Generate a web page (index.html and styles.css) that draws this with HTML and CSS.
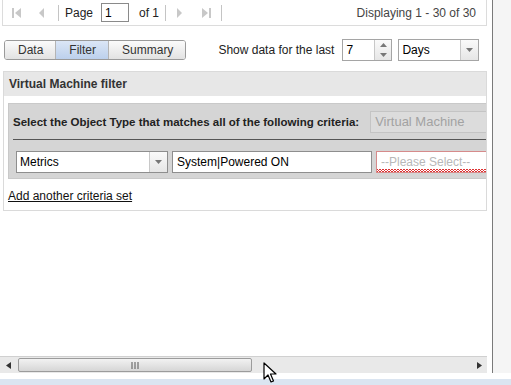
FILE: index.html
```html
<!DOCTYPE html>
<html lang="en">
<head>
  <meta charset="UTF-8">
  <title>Virtual Machine filter</title>
  <link rel="stylesheet" href="styles.css">
</head>
<body>
  <div class="window">
    <div class="main">
      <div class="pager">
        <span class="pg-btn first">
          <svg width="10" height="12" viewBox="0 0 10 12"><rect x="0" y="1" width="2" height="10" fill="#c8c8c8"/><path d="M9 1 L3 6 L9 11 Z" fill="#c8c8c8"/></svg>
        </span>
        <span class="pg-btn">
          <svg width="7" height="12" viewBox="0 0 7 12"><path d="M6 1 L1 6 L6 11 Z" fill="#c8c8c8"/></svg>
        </span>
        <span class="pg-sep"></span>
        <span class="pg-text">Page</span>
        <input class="pg-input" type="text" value="1">
        <span class="pg-text">of 1</span>
        <span class="pg-sep"></span>
        <span class="pg-btn next">
          <svg width="7" height="12" viewBox="0 0 7 12"><path d="M1 1 L6 6 L1 11 Z" fill="#c8c8c8"/></svg>
        </span>
        <span class="pg-btn last">
          <svg width="10" height="12" viewBox="0 0 10 12"><path d="M1 1 L7 6 L1 11 Z" fill="#c8c8c8"/><rect x="8" y="1" width="2" height="10" fill="#c8c8c8"/></svg>
        </span>
        <span class="pg-sep"></span>
        <span class="pg-info">Displaying 1 - 30 of 30</span>
      </div>

      <div class="options">
        <div class="tabs">
          <span class="tab">Data</span>
          <span class="tab tab-on">Filter</span>
          <span class="tab">Summary</span>
        </div>
        <span class="opt-label">Show data for the last</span>
        <div class="spinner">
          <span class="spin-value">7</span>
          <span class="spin-btns">
            <svg width="7" height="4" viewBox="0 0 7 4"><path d="M0 4 L3.5 0 L7 4 Z" fill="#777"/></svg>
            <svg width="7" height="4" viewBox="0 0 7 4"><path d="M0 0 L3.5 4 L7 0 Z" fill="#777"/></svg>
          </span>
        </div>
        <div class="combo days">
          <span class="combo-value">Days</span>
          <span class="combo-trigger">
            <svg width="7" height="4" viewBox="0 0 7 4"><path d="M0 0 L3.5 4 L7 0 Z" fill="#777"/></svg>
          </span>
        </div>
      </div>

      <div class="panel">
        <div class="panel-head">Virtual Machine filter</div>
        <div class="panel-body">
          <div class="criteria">
            <div class="crit-row">
              <span class="crit-label">Select the Object Type that matches all of the following criteria:</span>
              <span class="field disabled">Virtual Machine</span>
            </div>
            <div class="crit-set">
              <div class="combo metrics">
                <span class="combo-value">Metrics</span>
                <span class="combo-trigger">
                  <svg width="7" height="4" viewBox="0 0 7 4"><path d="M0 0 L3.5 4 L7 0 Z" fill="#777"/></svg>
                </span>
              </div>
              <span class="field attr">System|Powered ON</span>
              <span class="field invalid">--Please Select--</span>
            </div>
          </div>
          <a class="add-link" href="#">Add another criteria set</a>
        </div>
      </div>

      <div class="spacer"></div>

      <div class="hscroll">
        <span class="arrow">
          <svg width="5" height="7" viewBox="0 0 5 7"><path d="M5 0 L0 3.5 L5 7 Z" fill="#333"/></svg>
        </span>
        <span class="thumb">
          <svg width="9" height="7" viewBox="0 0 9 7"><path d="M1 0 V7 M4 0 V7 M7 0 V7" stroke="#555" stroke-width="1"/></svg>
        </span>
        <span class="track"></span>
        <span class="arrow">
          <svg width="5" height="7" viewBox="0 0 5 7"><path d="M0 0 L5 3.5 L0 7 Z" fill="#333"/></svg>
        </span>
      </div>
    </div>
    <div class="gutter"></div>
  </div>
  <div class="strip"></div>

  <svg class="cursor" width="14" height="22" viewBox="0 0 14 22">
    <path d="M1 1 L1 17 L5 13 L8 20 L10.5 19 L7.5 12 L13 12 Z" fill="#fff" stroke="#000" stroke-width="1.2" stroke-linejoin="round"/>
  </svg>
</body>
</html>
```

FILE: styles.css
```css
html, body {
  margin: 0;
  padding: 0;
  width: 511px;
  height: 385px;
  overflow: hidden;
  background: #fff;
  font-family: "Liberation Sans", Arial, sans-serif;
  font-size: 12px;
  color: #222;
}
.window {
  display: flex;
  height: 373px;
}
.main {
  width: 492px;
  display: flex;
  flex-direction: column;
}
.gutter {
  flex: 1;
  border-left: 1px solid #7a7a7a;
  background: #f5f5f5;
}
.strip {
  margin-top: 6px;
  height: 6px;
  background: #dbe5f1;
}

/* paging toolbar */
.pager {
  margin-left: 2px;
  width: 485px;
  height: 26px;
  box-sizing: border-box;
  border: 1px solid #dcdcdc;
  border-top: none;
  display: flex;
  align-items: center;
  padding-left: 9px;
}
.pg-btn {
  display: flex;
  align-items: center;
  margin-right: 13px;
}
.pg-btn.first {
  margin-right: 16px;
}
.pg-btn.next {
  margin-right: 18px;
}
.pg-btn.last {
  margin-right: 10px;
}
.pg-sep {
  width: 1px;
  height: 16px;
  background: #c4c4c4;
  margin: 0 6px 0 0;
}
.pg-sep + .pg-btn {
  margin-left: 4px;
}
.pg-text {
  margin-right: 8px;
}
.pg-text + .pg-sep {
  margin-left: -2px;
  margin-right: 6px;
}
.pg-input {
  width: 28px;
  height: 19px;
  box-sizing: border-box;
  padding: 1px 3px;
  margin: 0 10px 0 0;
  border: 1px solid #8a8a8a;
  font: inherit;
  color: #000;
}
.pg-info {
  margin-left: auto;
  margin-right: 10px;
  color: #444;
}

/* tabs and options row */
.options {
  display: flex;
  align-items: center;
  height: 22px;
  margin-top: 13px;
  padding-left: 4px;
}
.tabs {
  display: flex;
  height: 18px;
  border: 1px solid #9a9a9a;
  border-radius: 3px;
  overflow: hidden;
  margin-right: 32px;
}
.tab {
  display: flex;
  align-items: center;
  padding: 0 12px 0 13px;
  background: linear-gradient(#fbfbfb, #e2e2e2);
  border-left: 1px solid #b4b4b4;
  color: #333;
}
.tab:first-child {
  border-left: none;
}
.tab-on {
  background: linear-gradient(#dbe6f6, #bcd0ec);
}
.opt-label {
  margin-right: 8px;
}
.spinner,
.combo {
  display: flex;
  height: 20px;
  border: 1px solid #a5a5a5;
  background: #fff;
}
.spinner {
  width: 48px;
  margin-right: 6px;
}
.spin-value,
.combo-value {
  flex: 1;
  display: flex;
  align-items: center;
  padding-left: 3px;
  color: #000;
}
.spin-btns {
  width: 16px;
  display: flex;
  flex-direction: column;
  justify-content: space-around;
  align-items: center;
  border-left: 1px solid #c8c8c8;
  background: linear-gradient(#fafafa, #e6e6e6);
}
.combo-trigger {
  width: 17px;
  display: flex;
  align-items: center;
  justify-content: center;
  border-left: 1px solid #c8c8c8;
  background: linear-gradient(#fafafa, #e6e6e6);
}
.days {
  width: 79px;
}

/* filter panel */
.panel {
  margin: 10px 0 0 3px;
  width: 484px;
  box-sizing: border-box;
  border: 1px solid #dadada;
}
.panel-head {
  height: 24px;
  display: flex;
  align-items: center;
  padding-left: 5px;
  background: #e7e7e7;
  font-weight: bold;
  color: #333;
}
.panel-body {
  padding: 7px 0 7px 4px;
  overflow: hidden;
}
.criteria {
  width: 520px;
  background: #d5d5d5;
  border: 1px solid #c9c9c9;
}
.crit-row {
  display: flex;
  align-items: center;
  height: 35px;
  margin: 0 4px;
  border-bottom: 1px solid #555;
}
.crit-label {
  font-size: 11.5px;
  font-weight: bold;
  color: #222;
  margin-right: 11px;
}
.field {
  display: flex;
  align-items: center;
  height: 20px;
  padding-left: 4px;
  border: 1px solid #8e8e8e;
  background: #fff;
  color: #000;
}
.disabled {
  width: 125px;
  background: #dcdcdc;
  border-color: #c4c4c4;
  color: #a2a2a2;
  font-size: 13px;
}
.crit-set {
  display: flex;
  align-items: center;
  gap: 4px;
  padding: 11px 0 5px 7px;
}
.metrics {
  width: 150px;
  border-color: #8e8e8e;
}
.attr {
  width: 194px;
}
.invalid {
  width: 120px;
  border-color: #d68b8b;
  color: #b8b8b8;
  background:
    linear-gradient(135deg, transparent 40%, #d33 40%, #d33 60%, transparent 60%) 0 100% / 3px 3px repeat-x,
    linear-gradient(45deg, transparent 40%, #d33 40%, #d33 60%, transparent 60%) 0 100% / 3px 3px repeat-x,
    #fff;
}
.add-link {
  display: inline-block;
  margin-top: 10px;
  color: #111;
  text-decoration: underline;
}
.spacer {
  flex: 1;
}

/* horizontal scrollbar */
.hscroll {
  width: 487px;
  height: 16px;
  display: flex;
  align-items: center;
  background: #e9e9e9;
  border-top: 1px solid #d0d0d0;
}
.arrow {
  width: 16px;
  display: flex;
  justify-content: center;
}
.thumb {
  width: 232px;
  height: 12px;
  margin-left: 2px;
  display: flex;
  align-items: center;
  justify-content: center;
  border: 1px solid #9c9c9c;
  border-radius: 2px;
  background: linear-gradient(#f2f2f2, #d6d6d6);
}
.track {
  flex: 1;
}
.cursor {
  position: absolute;
  left: 263px;
  top: 362px;
}
```
